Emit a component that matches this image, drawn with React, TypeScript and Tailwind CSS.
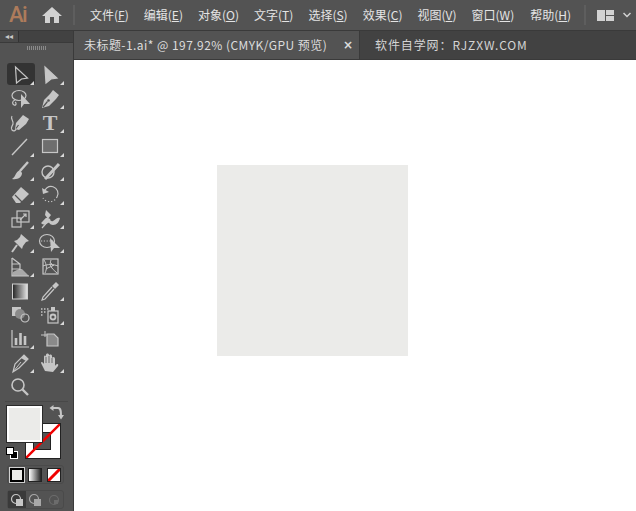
import React from "react";

const C = "#c6c6c6";
const cjk = '"Noto Sans CJK SC","Liberation Sans",sans-serif';

function Tool({ children, corner = true, active = false }: { children: React.ReactNode; corner?: boolean; active?: boolean }) {
  return (
    <div className="relative w-[30px] h-[24px] flex items-center justify-center">
      {active && <div className="absolute left-[2px] top-0 w-[28px] h-[22px] rounded-[3px] bg-[#333333]" />}
      <svg width="24" height="24" viewBox="0 0 24 24" className="relative" fill="none" stroke={C} strokeWidth="1.2">
        {children}
      </svg>
      {corner && <div className="absolute right-[1px] bottom-[2px] w-0 h-0 border-l-[4px] border-l-transparent border-b-[4px] border-b-[#d8d8d8]" />}
    </div>
  );
}

const Menu = ({ t, k, extra = "" }: { t: string; k: string; extra?: string }) => (
  <span className={"whitespace-nowrap " + extra}>
    {t}(<span className="underline">{k}</span>)
  </span>
);

const rows: [React.ReactNode, boolean, React.ReactNode, boolean][] = [
  [
    <path d="M7.5 4 L19.5 15 L13.5 16 L8.5 20 Z" />, true,
    <path d="M7 4 L19 15 L13 16 L8 20 Z" fill={C} />, true,
  ],
  [
    <g><ellipse cx="11" cy="8.5" rx="7" ry="5" /><path d="M7 13c-3 1-3 4-1 5s3-2 1-3" /><path d="M13 7 L22 17 L16 17 L13 21 Z" fill={C} stroke="none" /></g>, false,
    <g><path d="M15 3 L21 8 L18 12 L11 19 L4 21 L6 13 L12 7 Z" fill={C} stroke="none" /><path d="M9.5 14.5 L5 20" stroke="#535353" /><circle cx="10.5" cy="13.5" r="1.3" fill="#535353" stroke="none" /></g>, true,
  ],
  [
    <g><path d="M15 4 L21 8 L18 13 L11 19 L7 18 L8 12 Z" fill={C} stroke="none" /><path d="M10.5 14 L8 17.5" stroke="#535353" /><path d="M4 5c-2 3 2 5 1 8s-3 4-1 6 4 0 4-1" /></g>, false,
    <text x="12" y="19" textAnchor="middle" fontFamily="Liberation Serif, serif" fontWeight="700" fontSize="22" fill={C} stroke="none">T</text>, true,
  ],
  [
    <path d="M4 20 L19 4" strokeWidth="1.4" />, true,
    <rect x="4.5" y="4.5" width="15" height="13" fill="#6e6e6e" stroke={C} />, true,
  ],
  [
    <g><path d="M20 3 L12 12" strokeWidth="2.4" /><path d="M12 11 C7 13 8 18 4 20 C10 21 14 18 14 14 Z" fill={C} stroke="none" /></g>, true,
    <g><circle cx="10" cy="13" r="6" strokeWidth="1.4" /><path d="M21 5 L9 18 L7 20" strokeWidth="3" /></g>, true,
  ],
  [
    <g><path d="M4 14 L13 4 L21 11 L12 20 L8 20 Z" fill={C} stroke="none" /><path d="M7 12 L14 19" stroke="#535353" /></g>, true,
    <g><path d="M6 10 A7 7 0 1 1 19 14" strokeWidth="1.2" /><path d="M4 5 L5 11 L11 9 Z" fill={C} stroke="none" /><path d="M19 14 A8 8 0 0 1 5 15" strokeDasharray="1.2 2" /></g>, true,
  ],
  [
    <g><rect x="4" y="11" width="9" height="9" strokeWidth="1.2" /><rect x="9" y="4" width="12" height="11" strokeWidth="1.2" /><path d="M12 13 L18 7 M15 7 h3 v3" /></g>, true,
    <g><path d="M3 16c3-2 4-6 7-5s2 4 5 3 3-4 7-3c-1 4-3 7-7 7s-3-3-5-2-4 3-7 0Z" fill={C} stroke="none" /><path d="M8 3 L13 8 L10 12 L7 8 Z" fill={C} stroke="none" /><path d="M4 21 L12 12" /></g>, true,
  ],
  [
    <g><path d="M13 3 L21 10 L18 11 L15 15 L14 18 L6 10 L9 9 L12 6 Z" fill={C} stroke="none" /><path d="M9 14 L4 21" strokeWidth="2" /></g>, true,
    <g><ellipse cx="9" cy="10" rx="7.5" ry="6.5" /><path d="M3 10h12" strokeDasharray="1.2 1.6" /><path d="M12 7 L22 17 L16 17 L13 21 Z" fill={C} stroke="none" /></g>, true,
  ],
  [
    <g><path d="M4 3 L4 21 H21" /><path d="M4 3 L12 9 L12 15 M4 9 H12 M4 14 H12" /><path d="M4 21 H21 L14 14 L11 14 L5 17 Z" fill={C} stroke="none" opacity="0.75" /></g>, true,
    <g><rect x="5" y="4" width="15" height="15" /><path d="M6 5c3 5 3 9 1 13M13 5c-2 5 0 8 6 13M5 11c5-2 10-2 15 0M8 14c3-2 5-2 8-4M13 8l2 3" strokeWidth="1" /></g>, false,
  ],
  [
    <g><defs><linearGradient id="gr" x1="0" x2="1" y1="0" y2="0"><stop offset="0" stopColor="#222" /><stop offset="1" stopColor="#e6e6e6" /></linearGradient></defs><rect x="4.5" y="5" width="15" height="15" fill="url(#gr)" stroke="#d0d0d0" strokeWidth="1" /></g>, false,
    <g><path d="M18 3 L21 6 L17 10 L14 7 Z" fill={C} stroke="none" /><path d="M14 8 L5 18 L4 21 L7 20 L16 10" strokeWidth="1.2" /></g>, true,
  ],
  [
    <g><rect x="4" y="4" width="9" height="9" fill={C} stroke="none" /><circle cx="12" cy="11" r="5" fill="#8a8a8a" stroke="none" /><circle cx="17" cy="15" r="4" strokeWidth="1.2" /></g>, false,
    <g><path d="M3 6h1.5M6 6h1.5M9 6h1.5M3 9h1.5M6 9h1.5M3 12h1.5" strokeWidth="1.5" /><rect x="10" y="8" width="10" height="12" /><rect x="13" y="4" width="4" height="4" fill={C} stroke="none" /><circle cx="15" cy="14" r="2.5" strokeWidth="1.8" /></g>, true,
  ],
  [
    <g><path d="M4 3 V20 H21" strokeWidth="1.2" /><path d="M8 11v7M12.5 6v12M17 9v9" strokeWidth="2.6" /></g>, true,
    <g><path d="M3 8h6M7 4v6" strokeWidth="1" /><path d="M9 7 H16 L20 11 V19 H9 Z" stroke={C} strokeWidth="1.2" fill="#8a8a8a" /></g>, false,
  ],
  [
    <g><path d="M5 21 L7 13 L16 4 L20 8 L11 17 Z" /><path d="M16 4 L13 7 L18 10 L20 8 Z" fill={C} stroke="none" /><path d="M5 21 L13 11" strokeWidth="1" /></g>, true,
    <g><path d="M7 20 L3 12 C3 10 5 11 6 13 L6 6 C6 4 8 4 8 6 L8 4 C8 2 11 2 11 4 L11 5 C11 3 14 3 14 5 L14 7 C15 5 17 6 17 8 L17 15 C19 12 21 13 20 15 L15 21 Z" fill={C} stroke="none" /><path d="M8 6 V12 M11 5 V12 M14 7 V12" stroke="#535353" strokeWidth="0.8" /></g>, true,
  ],
];

export default function App() {
  return (
    <div className="w-[636px] h-[511px] overflow-hidden flex flex-col bg-white" style={{ fontFamily: cjk }}>
      {/* Title and menu bar */}
      <div className="h-[31px] shrink-0 bg-[#535353] border-b border-[#3a3a3a] flex items-center text-[12px] text-[#e4e4e4]">
        <span className="ml-[9px] w-[19px] text-[22px] leading-none font-medium tracking-[-1.5px] text-[#ad7b5b]" style={{ fontFamily: 'Roboto,sans-serif' }}>Ai</span>
        <svg width="20" height="18" viewBox="0 0 20 18" className="ml-[14px]" fill="#d2d2d2">
          <path d="M10 1 L20 10 H17 V17 H12 V11 H8 V17 H3 V10 H0 Z" />
        </svg>
        <div className="ml-[11px] w-[2px] h-[20px] bg-[#5e5e5e]" />
        <div className="ml-[15px] flex gap-[15px]">
          <Menu t="文件" k="F" />
          <Menu t="编辑" k="E" />
          <Menu t="对象" k="O" />
          <Menu t="文字" k="T" />
          <Menu t="选择" k="S" />
          <Menu t="效果" k="C" />
          <Menu t="视图" k="V" />
          <Menu t="窗口" k="W" />
          <Menu t="帮助" k="H" extra="ml-[1px]" />
        </div>
        <div className="ml-auto w-[2px] h-[20px] bg-[#5e5e5e]" />
        <div className="ml-[11px] mr-[5px] flex items-center gap-[9px]">
          <div className="grid grid-cols-2 gap-[1px] w-[17px] h-[11px]">
            <div className="row-span-2 bg-[#d2d2d2]" />
            <div className="bg-[#d2d2d2]" />
            <div className="bg-[#d2d2d2]" />
          </div>
          <svg width="8" height="6" viewBox="0 0 8 6" fill="none" stroke="#d2d2d2" strokeWidth="1.5"><path d="M0.5 1 L4 4.5 L7.5 1" /></svg>
        </div>
      </div>

      <div className="flex flex-1 min-h-0">
        {/* Tools panel */}
        <div className="w-[74px] shrink-0 bg-[#535353] border-r border-[#3a3a3a] flex flex-col">
          <div className="h-[12px] shrink-0 bg-[#424242] flex border-b border-[#3a3a3a]">
            <div className="w-[19px] border-r border-[#333333] bg-[#4a4a4a] flex items-center justify-center text-[8px] leading-none text-[#c8c8c8]" style={{ fontFamily: '"DejaVu Sans",sans-serif' }}>◂◂</div>
          </div>
          <div className="h-[20px] shrink-0 flex justify-center pt-[3px]">
            <div className="w-[19px] h-[4px] bg-[repeating-linear-gradient(90deg,#8a8a8a_0px,#8a8a8a_1px,transparent_1px,transparent_2px)]" />
          </div>
          <div className="pl-[5px] shrink-0 grid grid-cols-[30px_30px]">
            {rows.map((r, i) => (
              <React.Fragment key={i}>
                <Tool corner={r[1]} active={i === 0}>{r[0]}</Tool>
                <Tool corner={r[3]}>{r[2]}</Tool>
              </React.Fragment>
            ))}
            <Tool corner={false}>
              <g><circle cx="10" cy="10" r="6" strokeWidth="1.6" /><path d="M14.5 14.5 L20 20" strokeWidth="2.4" /></g>
            </Tool>
          </div>
          <div className="mx-[5px] mt-[2px] h-px shrink-0 bg-[#484848]" />
          {/* Fill and stroke */}
          <div className="relative h-[59px] shrink-0 mt-[4px]">
            <div className="absolute left-[25px] top-[17px] w-[36px] h-[36px] bg-white border border-[#222222]">
              <div className="absolute left-[7px] top-[8px] w-[18px] h-[18px] bg-[#535353] border border-[#222222]" />
              <svg width="34" height="34" viewBox="0 0 34 34" className="absolute inset-0"><path d="M0 34 L34 0" stroke="#f00000" strokeWidth="2.4" /></svg>
            </div>
            <div className="absolute left-[7px] top-0 w-[35px] h-[36px] bg-[#ebebe9] border-2 border-white outline outline-1 outline-[#2a2a2a]" />
            <svg width="15" height="15" viewBox="0 0 15 15" className="absolute left-[49px] top-[-1px]" fill="none" stroke="#c6c6c6" strokeWidth="2">
              <path d="M2 3 H9 C12 3 12 7 12 11" />
              <path d="M4.5 0 L0.5 3 L4.5 6 Z M9 10 L12 14.5 L15 10 Z" fill="#c6c6c6" stroke="none" />
            </svg>
            <div className="absolute left-[6px] top-[41px] w-[12px] h-[12px]">
              <div className="absolute left-[4px] top-[4px] w-[8px] h-[8px] bg-black border border-white" />
              <div className="absolute left-0 top-0 w-[8px] h-[8px] bg-white border border-black" />
            </div>
          </div>
          {/* Color mode */}
          <div className="mx-[7px] w-[57px] h-[19px] shrink-0 rounded-[3px] border border-[#4a4a4a] flex items-center justify-around">
            <div className="w-[14px] h-[14px] bg-[#ebebe9] border-2 border-black outline outline-1 outline-[#d0d0d0]" />
            <div className="w-[14px] h-[14px] border border-[#222222] bg-[linear-gradient(90deg,#ffffff,#222222)]" />
            <div className="w-[14px] h-[14px] border border-[#222222] bg-white overflow-hidden">
              <svg width="12" height="12" viewBox="0 0 12 12"><path d="M0 12 L12 0" stroke="#f00000" strokeWidth="3" /></svg>
            </div>
          </div>
          {/* Drawing modes */}
          <div className="mx-[7px] w-[57px] mt-[6px] h-[19px] shrink-0 rounded-[3px] border border-[#4a4a4a] flex">
            <div className="w-[19px] bg-[#3a3a3a] flex items-center justify-center">
              <svg width="14" height="14" viewBox="0 0 14 14"><circle cx="6" cy="6" r="4.5" fill="none" stroke="#c6c6c6" strokeWidth="1.2" /><rect x="6" y="6" width="7" height="7" fill="#c6c6c6" /></svg>
            </div>
            <div className="w-[19px] flex items-center justify-center">
              <svg width="14" height="14" viewBox="0 0 14 14"><circle cx="6" cy="6" r="4.5" fill="none" stroke="#a8a8a8" strokeWidth="1.2" /><rect x="6" y="6" width="7" height="7" fill="#a8a8a8" /></svg>
            </div>
            <div className="w-[19px] flex items-center justify-center">
              <svg width="14" height="14" viewBox="0 0 14 14"><circle cx="7" cy="7" r="4.5" fill="none" stroke="#6c6c6c" strokeWidth="1.2" /><rect x="7" y="7" width="4" height="4" fill="#6c6c6c" /></svg>
            </div>
          </div>
        </div>

        {/* Document area */}
        <div className="flex-1 min-w-0 flex flex-col">
          <div className="h-[29px] shrink-0 bg-[#424242] flex text-[12px] text-[#dcdcdc] border-b border-[#3a3a3a]">
            <div className="w-[286px] bg-[#535353] border-r border-[#3a3a3a] flex items-center pl-[10px] whitespace-nowrap">
              <span className="tracking-[0.45px]">未标题-1.ai* @ 197.92% (CMYK/GPU 预览)</span>
              <span className="ml-auto mr-[6px] text-[12px] font-bold leading-none" style={{ fontFamily: '"DejaVu Sans",sans-serif' }}>×</span>
            </div>
            <div className="pl-[15px] flex items-center whitespace-nowrap tracking-[0.9px] text-[#d4d4d4]">软件自学网：RJZXW.COM</div>
          </div>
          <div className="flex-1 bg-white pl-[143px] pt-[105px]">
            <div className="w-[191px] h-[191px] bg-[#ebebe9]" />
          </div>
        </div>
      </div>
    </div>
  );
}
